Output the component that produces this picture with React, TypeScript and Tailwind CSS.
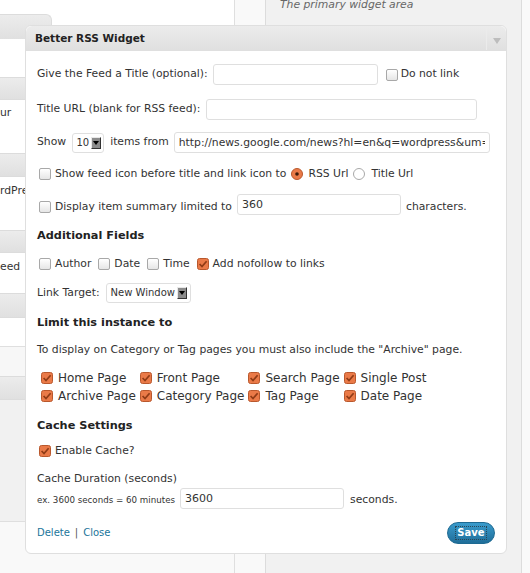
import React from "react";

function Box({ on }: { on?: boolean }) {
  if (!on)
    return (
      <span className="block h-[12px] w-[12px] shrink-0 rounded-[2px] border border-[#a8a8a8] bg-linear-to-b from-white to-[#e6e6e6]" />
    );
  return (
    <svg width="12" height="12" viewBox="0 0 12 12" className="block shrink-0">
      <rect x="0.5" y="0.5" width="11" height="11" rx="2" fill="#ea7a48" stroke="#b9582d" />
      <path d="M2.6 6 L5 8.5 L9.6 3.2" fill="none" stroke="#8f3b16" strokeWidth="1.7" />
    </svg>
  );
}

function Radio({ on }: { on?: boolean }) {
  return (
    <svg width="12" height="12" viewBox="0 0 12 12" className="block shrink-0">
      <circle cx="6" cy="6" r="5.5" fill={on ? "#ea7a48" : "#fff"} stroke={on ? "#b9582d" : "#a8a8a8"} />
      {on && <circle cx="6" cy="6" r="1.8" fill="#3b1a0a" />}
    </svg>
  );
}

function DropBtn() {
  return (
    <span className="flex h-[12px] w-[10px] shrink-0 items-center justify-center border border-t-[#e8e8e8] border-l-[#e8e8e8] border-r-[#333] border-b-[#333] bg-[#8c8c8c]">
      <svg width="6" height="4" viewBox="0 0 6 4">
        <path d="M0 0h6L3 4z" fill="#000" />
      </svg>
    </span>
  );
}

function Bar({ h }: { h: string }) {
  return <div className={`${h} border-y border-[#dcdcdc] bg-linear-to-b from-[#ececec] to-[#e0e0e0]`} />;
}

function LeftColumn() {
  return (
    <div className="flex w-[235px] shrink-0 flex-col border-r border-[#dfdfdf] bg-white">
      <div className="h-[14px]" />
      <div className="h-[25px] w-[52px] rounded-tr-[6px] border-r border-t border-[#dcdcdc] bg-linear-to-b from-[#ececec] to-[#e0e0e0]" />
      <div className="h-[38px]" />
      <Bar h="h-[23px]" />
      <div className="h-[53px] pt-[5px] leading-[16px]">ur</div>
      <Bar h="h-[24px]" />
      <div className="h-[53px] pt-[6px] leading-[16px]">rdPress</div>
      <Bar h="h-[23px]" />
      <div className="h-[40px] pt-[6px] leading-[16px]">eed</div>
      <Bar h="h-[25px]" />
      <div className="h-[28px]" />
      <div className="h-[30px] border-t border-[#dfdfdf] bg-[#f7f7f7]" />
      <Bar h="h-[24px]" />
      <div className="h-[121px] bg-[#f1f1f1]" />
      <div className="flex-1 border-t border-[#dfdfdf] bg-[#f9f9f9]" />
    </div>
  );
}

const input =
  "h-[21px] rounded-[3px] border border-[#dfdfdf] bg-white px-[4px] text-[#333] outline-none";

export default function App() {
  const pages = [
    ["Home Page", "Front Page", "Search Page", "Single Post"],
    ["Archive Page", "Category Page", "Tag Page", "Date Page"],
  ];

  return (
    <div className="relative flex h-[573px] w-[530px] overflow-hidden font-['DejaVu_Sans',sans-serif] text-[10.8px] leading-none text-[#333]">
      <LeftColumn />
      <div className="w-[31px] shrink-0 border-r border-[#dcdcdc] bg-[#f9f9f9]" />
      <div className="w-[256px] shrink-0 border-r border-[#dcdcdc] bg-[#f1f1f1] pl-[14px]">
        <p className="-mt-[3px] italic leading-[16px] text-[#666]">The primary widget area</p>
      </div>
      <div className="flex-1 bg-[#f9f9f9]" />

      {/* widget being edited, lifted over the sidebar */}
      <div className="absolute left-[25px] top-[25px] w-[482px] rounded-[6px] border border-[#dfdfdf] bg-white">
        <div className="flex h-[25px] rounded-t-[6px] border-b border-[#dfdfdf] bg-linear-to-b from-[#ececec] to-[#e0e0e0]">
          <div className="flex flex-1 items-center pl-[9px] text-[10.5px] font-bold text-[#222]">Better RSS Widget</div>
          <div className="flex w-[20px] items-center justify-center border-l border-[#ebebeb] pt-[5px]">
            <svg width="8" height="6" viewBox="0 0 8 6">
              <path d="M0 0h8L4 6z" fill="#bdbdbd" />
            </svg>
          </div>
        </div>

        <div className="px-[11px] pb-[9px] pt-[13px]">
          <div className="flex h-[21px] items-center">
            <span>Give the Feed a Title (optional):</span>
            <input readOnly className={`${input} ml-[5px] w-[165px] text-[11px]`} />
            <span className="ml-[8px]">
              <Box />
            </span>
            <span className="ml-[3px]">Do not link</span>
          </div>

          <div className="mt-[14px] flex h-[21px] items-center">
            <span>Title URL (blank for RSS feed):</span>
            <input readOnly className={`${input} ml-[6px] w-[271px] text-[11px]`} />
          </div>

          <div className="mt-[12px] flex h-[21px] items-center">
            <span>Show</span>
            <span className="ml-[6px] flex h-[20px] w-[32px] items-center justify-end gap-[2px] rounded-[3px] border border-[#dfdfdf] pr-[2px] text-[10px]">
              10
              <DropBtn />
            </span>
            <span className="ml-[6px]">items from</span>
            <input
              readOnly
              value="http://news.google.com/news?hl=en&q=wordpress&um=1&ie=UTF-8&output=rss"
              className={`${input} ml-[5px] w-[316px] text-[10.8px]`}
            />
          </div>

          <div className="mt-[13px] flex h-[16px] items-center pl-[2px]">
            <Box />
            <span className="ml-[4px]">Show feed icon before title and link icon to</span>
            <span className="ml-[5px]">
              <Radio on />
            </span>
            <span className="ml-[5px]">RSS Url</span>
            <span className="ml-[5px]">
              <Radio />
            </span>
            <span className="ml-[6px]">Title Url</span>
          </div>

          <div className="mt-[12px] flex h-[21px] items-center pl-[2px]">
            <span className="mt-[5px] flex items-center gap-[4px]">
              <Box />
              Display item summary limited to
            </span>
            <input readOnly value="360" className={`${input} ml-[5px] w-[164px] text-[11px]`} />
            <span className="ml-[5px] mt-[5px]">characters.</span>
          </div>

          <div className="mt-[13px] flex h-[16px] items-center text-[11.3px] font-bold text-[#222]">Additional Fields</div>

          <div className="mt-[12px] flex h-[16px] items-center gap-[7px] pl-[2px]">
            {[
              ["Author", false],
              ["Date", false],
              ["Time", false],
              ["Add nofollow to links", true],
            ].map(([label, on]) => (
              <span key={label as string} className="flex items-center gap-[4px]">
                <Box on={on as boolean} />
                {label}
              </span>
            ))}
          </div>

          <div className="mt-[11px] flex h-[20px] items-center">
            <span>Link Target:</span>
            <span className="ml-[6px] flex h-[20px] w-[85px] items-center gap-[2px] rounded-[3px] border border-[#dfdfdf] pl-[4px] text-[10px]">
              New Window
              <DropBtn />
            </span>
          </div>

          <div className="mt-[12px] flex h-[16px] items-center text-[11.3px] font-bold text-[#222]">Limit this instance to</div>

          <div className="mt-[11px] flex h-[16px] items-center">
            To display on Category or Tag pages you must also include the "Archive" page.
          </div>

          <div className="mt-[11px] grid grid-cols-[repeat(4,auto)] justify-start gap-x-[4px] pl-[4px] text-[12px]">
            {pages.flat().map((p) => (
              <span key={p} className="flex h-[18px] items-center gap-[5px]">
                <Box on />
                {p}
              </span>
            ))}
          </div>

          <div className="mt-[13px] flex h-[16px] items-center text-[11.3px] font-bold text-[#222]">Cache Settings</div>

          <div className="mt-[9px] flex h-[16px] items-center gap-[4px] pl-[2px]">
            <Box on />
            Enable Cache?
          </div>

          <div className="mt-[12px] flex h-[16px] items-center">Cache Duration (seconds)</div>

          <div className="mt-[1px] flex h-[21px] items-center">
            <span className="mt-[3px] text-[8.7px]">ex. 3600 seconds = 60 minutes</span>
            <input readOnly value="3600" className={`${input} ml-[5px] w-[164px] text-[11px]`} />
            <span className="ml-[6px] mt-[3px]">seconds.</span>
          </div>

          <div className="mt-[13px] flex h-[22px] items-center justify-between">
            <span className="flex items-center gap-[5px] text-[10px]">
              <a className="text-[#21759b]">Delete</a>
              <span className="text-[#555]">|</span>
              <a className="text-[#21759b]">Close</a>
            </span>
            <button className="flex h-[22px] w-[48px] items-center justify-center rounded-full border border-[#1e6a92] bg-linear-to-b from-[#3a9bcc] to-[#1f6e99] text-[10px] font-bold text-white">
              <span className="px-[1px] py-[1px] outline-1 outline-dotted outline-[#2a4656]">Save</span>
            </button>
          </div>
        </div>
      </div>
    </div>
  );
}
